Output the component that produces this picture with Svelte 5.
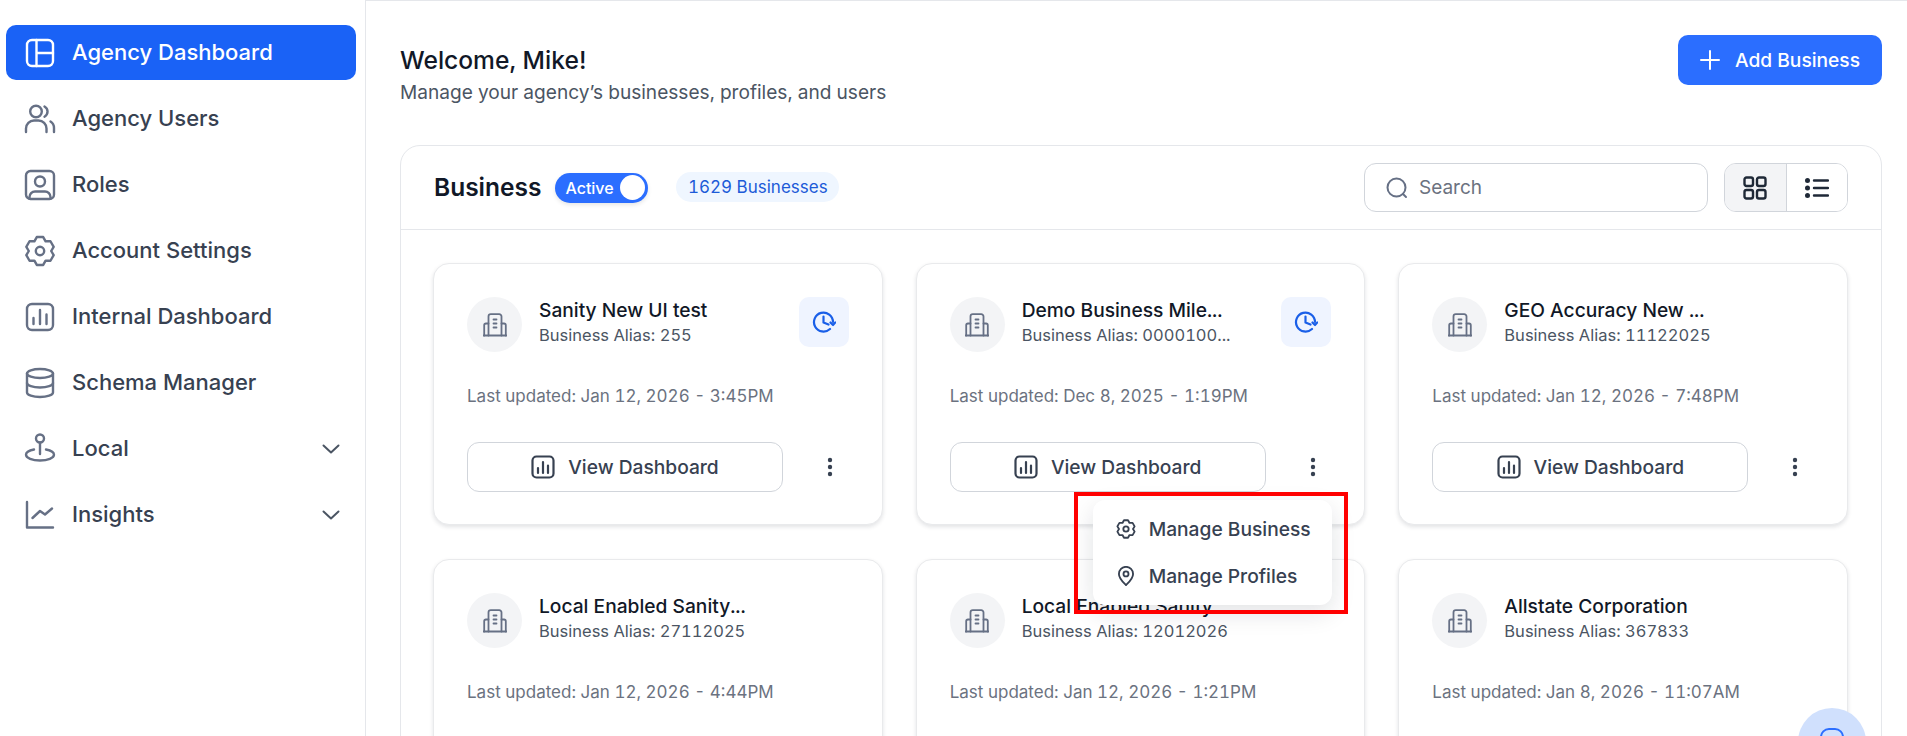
<script>
  function gearPath(cx, cy, ro, ri) {
    const pts = [];
    for (let k = 0; k < 6; k++) {
      const a = -90 + 60 * k;
      for (const [d, r] of [[-13, ro], [13, ro], [30, ri]]) {
        const t = ((a + d) * Math.PI) / 180;
        pts.push(`${(cx + r * Math.cos(t)).toFixed(2)} ${(cy + r * Math.sin(t)).toFixed(2)}`);
      }
    }
    return 'M' + pts.join('L') + 'Z';
  }

  const nav = [
    { label: 'Agency Dashboard', icon: 'layout', active: true },
    { label: 'Agency Users', icon: 'users' },
    { label: 'Roles', icon: 'roles' },
    { label: 'Account Settings', icon: 'gear' },
    { label: 'Internal Dashboard', icon: 'chart' },
    { label: 'Schema Manager', icon: 'db' },
    { label: 'Local', icon: 'local', chevron: true },
    { label: 'Insights', icon: 'insights', chevron: true }
  ];

  const cards = [
    { title: 'Sanity New UI test', alias: 'Business Alias: 255', updated: 'Last updated: Jan 12, 2026 - 3:45PM', sync: true },
    { title: 'Demo Business Mile...', alias: 'Business Alias: 0000100...', updated: 'Last updated: Dec 8, 2025 - 1:19PM', sync: true, menu: true },
    { title: 'GEO Accuracy New ...', alias: 'Business Alias: 11122025', updated: 'Last updated: Jan 12, 2026 - 7:48PM' },
    { title: 'Local Enabled Sanity...', alias: 'Business Alias: 27112025', updated: 'Last updated: Jan 12, 2026 - 4:44PM' },
    { title: 'Local Enabled Sanity...', alias: 'Business Alias: 12012026', updated: 'Last updated: Jan 12, 2026 - 1:21PM' },
    { title: 'Allstate Corporation', alias: 'Business Alias: 367833', updated: 'Last updated: Jan 8, 2026 - 11:07AM' }
  ];
</script>

{#snippet navIcon(name)}
  <svg class="nav-icon" viewBox="0 0 32 32" fill="none" stroke="currentColor" stroke-width="2.400" stroke-linecap="round" stroke-linejoin="round">
    {#if name === 'layout'}
      <rect x="3" y="3" width="26" height="26" rx="5" />
      <path d="M12.500 3v26M12.500 16H29" />
    {:else if name === 'users'}
      <circle cx="12" cy="8.500" r="5.800" />
      <path d="M2 29v-3.500a8 8 0 0 1 8-8h4.500a8 8 0 0 1 8 8V29" />
      <path d="M20.500 3.500a5.800 5.800 0 0 1 0 10.200" />
      <path d="M26.500 18.500a7.600 7.600 0 0 1 3.500 6.500V29" />
    {:else if name === 'roles'}
      <rect x="2" y="2" width="28" height="28" rx="4.500" />
      <circle cx="16" cy="12.500" r="5" />
      <path d="M5.500 29.500v-1.500a5.500 5.500 0 0 1 5.500-5.500h10a5.500 5.500 0 0 1 5.500 5.500v1.500" />
    {:else if name === 'gear'}
      <path d={gearPath(16, 16, 14.300, 11.200)} />
      <circle cx="16" cy="16" r="4.200" />
    {:else if name === 'chart'}
      <rect x="3" y="3" width="26" height="26" rx="5" />
      <path d="M9.500 17v6M16 9v14M22.500 13.500V23" />
    {:else if name === 'db'}
      <ellipse cx="16" cy="6.500" rx="13" ry="4.500" />
      <path d="M3 6.500v19c0 2.500 5.800 4.500 13 4.500s13-2 13-4.500v-19" />
      <path d="M3 16c0 2.500 5.800 4.500 13 4.500s13-2 13-4.500" />
    {:else if name === 'local'}
      <circle cx="16" cy="5.500" r="4" />
      <path d="M16 9.500V21" />
      <path d="M10 16.500c-4.800 .9-8 2.900-8 5.300 0 3.200 6.300 5.700 14 5.700s14-2.500 14-5.700c0-2.400-3.200-4.400-8-5.300" />
    {:else if name === 'insights'}
      <path d="M3 3v25.500h26" />
      <path d="M8.500 19l7.500-7 5 3.500 7-6" />
    {/if}
  </svg>
{/snippet}

{#snippet building()}
  <svg class="building" viewBox="0 0 24 24" fill="none" stroke="currentColor" stroke-width="1.800" stroke-linecap="round" stroke-linejoin="round">
    <path d="M.5 22.500h23" />
    <path d="M5.500 22.500V3.500a2.300 2.300 0 0 1 2.300-2.300h8.400a2.300 2.300 0 0 1 2.300 2.300v19" />
    <path d="M5.500 10.500H3a1.800 1.800 0 0 0-1.800 1.800V22.500M18.500 10.500H21a1.800 1.800 0 0 1 1.800 1.800V22.500" />
    <path d="M10.500 6.500h3M10.500 10.500h3M10.500 14.500h3" />
  </svg>
{/snippet}

{#snippet chartSmall()}
  <svg class="chart-small" viewBox="0 0 24 24" fill="none" stroke="currentColor" stroke-width="2.200" stroke-linecap="round" stroke-linejoin="round">
    <rect x="1.500" y="1.500" width="21" height="21" rx="4" />
    <path d="M7 13v5M12 7v11M17 10.500V18" />
  </svg>
{/snippet}

<div class="page">
  <aside class="sidebar">
    <nav class="nav">
      {#each nav as item}
        <a class="nav-item" class:active={item.active} href="#top">
          {@render navIcon(item.icon)}
          <span class="nav-label">{item.label}</span>
          {#if item.chevron}
            <svg class="chevron" viewBox="0 0 18 10" fill="none" stroke="currentColor" stroke-width="2" stroke-linecap="round" stroke-linejoin="round"><path d="M1.500 1.500L9 8.500l7.500-7" /></svg>
          {/if}
        </a>
      {/each}
    </nav>
  </aside>

  <main class="main">
    <header class="top">
      <div class="welcome">
        <h1>Welcome, Mike!</h1>
        <p>Manage your agency’s businesses, profiles, and users</p>
      </div>
      <button class="add">
        <svg viewBox="0 0 20 20" fill="none" stroke="currentColor" stroke-width="2" stroke-linecap="round"><path d="M10 1v18M1 10h18" /></svg>
        Add Business
      </button>
    </header>

    <section class="panel">
      <div class="panel-head">
        <h2>Business</h2>
        <div class="toggle"><span>Active</span><i></i></div>
        <span class="count">1629 Businesses</span>
        <label class="search">
          <svg viewBox="0 0 24 24" fill="none" stroke="currentColor" stroke-width="2" stroke-linecap="round"><circle cx="11.500" cy="11.500" r="9" /><path d="M18 18l3 3" /></svg>
          <input placeholder="Search" />
        </label>
        <div class="views">
          <button class="view on" aria-label="Grid view">
            <svg viewBox="0 0 24 24" fill="none" stroke="currentColor" stroke-width="2.400" stroke-linejoin="round"><rect x="1.500" y="1.500" width="8.500" height="8.500" rx="2" /><rect x="14" y="1.500" width="8.500" height="8.500" rx="2" /><rect x="1.500" y="14" width="8.500" height="8.500" rx="2" /><rect x="14" y="14" width="8.500" height="8.500" rx="2" /></svg>
          </button>
          <button class="view" aria-label="List view">
            <svg viewBox="0 0 24 24" fill="none" stroke="currentColor" stroke-width="2.400" stroke-linecap="round"><path d="M9 4.500h14M9 12h14M9 19.500h14" /><circle cx="2.500" cy="4.500" r="1.300" fill="currentColor" /><circle cx="2.500" cy="12" r="1.300" fill="currentColor" /><circle cx="2.500" cy="19.500" r="1.300" fill="currentColor" /></svg>
          </button>
        </div>
      </div>

      <div class="grid">
        {#each cards as card}
          <article class="card">
            <div class="card-top">
              <div class="avatar">{@render building()}</div>
              <div class="names">
                <div class="name">{card.title}</div>
                <div class="alias">{card.alias}</div>
              </div>
              {#if card.sync}
                <div class="sync">
                  <svg viewBox="0 0 24 24" fill="none" stroke="currentColor" stroke-width="2.200" stroke-linecap="round" stroke-linejoin="round">
                    <path d="M21 12a9.500 9.500 0 1 0-3 7" />
                    <path d="M11.500 6.500V12.500l5 2" />
                    <path d="M23.300 12.500L21 15l-2.500-2.500" />
                  </svg>
                </div>
              {/if}
            </div>
            <div class="updated">{card.updated}</div>
            <div class="actions">
              <button class="dash">{@render chartSmall()}View Dashboard</button>
              <button class="more" aria-label="More">
                <svg viewBox="0 0 6 20" fill="currentColor"><circle cx="3" cy="3" r="2.200" /><circle cx="3" cy="10" r="2.200" /><circle cx="3" cy="17" r="2.200" /></svg>
              </button>
            </div>
            {#if card.menu}
              <div class="menu">
                <div class="menu-item">
                  <svg viewBox="0 0 24 24" fill="none" stroke="currentColor" stroke-width="2.200" stroke-linejoin="round"><path d={gearPath(12, 12, 10.800, 8.400)} /><circle cx="12" cy="12" r="3.200" /></svg>
                  Manage Business
                </div>
                <div class="menu-item">
                  <svg viewBox="0 0 24 24" fill="none" stroke="currentColor" stroke-width="2.200" stroke-linejoin="round"><path d="M12 23c-1-1.300-8.500-7.500-8.500-13.500a8.500 8.500 0 0 1 17 0C20.500 15.500 13 21.700 12 23z" /><circle cx="12" cy="9.500" r="3" /></svg>
                  Manage Profiles
                </div>
              </div>
            {/if}
          </article>
        {/each}
      </div>
    </section>
  </main>

  <div class="callout"></div>
  <button class="fab" aria-label="Chat">
    <svg viewBox="0 0 24 24" fill="none" stroke="currentColor" stroke-width="2"><rect x="1" y="1" width="22" height="22" rx="8" /></svg>
  </button>
</div>

<style>
  :global(body) {
    margin: 0;
    background: #fff;
    font-family: Inter, "Liberation Sans", sans-serif;
    color: #111827;
    font-variant-numeric: tabular-nums;
  }
  .page {
    position: relative;
    display: flex;
    height: 736px;
    overflow: hidden;
    background: #fff;
  }
  .sidebar {
    box-sizing: border-box;
    width: 366px;
    flex: none;
    padding: 25px 9px 0 6px;
    border-right: 1px solid #e5e7eb;
  }
  .nav {
    display: flex;
    flex-direction: column;
    gap: 11px;
  }
  .nav-item {
    display: flex;
    align-items: center;
    height: 55px;
    padding: 0 16px 0 18px;
    gap: 16px;
    border-radius: 10px;
    color: #374151;
    text-decoration: none;
    font-size: 22px;
    line-height: 28px;
    font-weight: 500;
  }
  .nav-item.active {
    background: #1a62f6;
    color: #fff;
  }
  .nav-icon {
    width: 32px;
    height: 32px;
    flex: none;
    color: #667085;
  }
  .active .nav-icon {
    color: #fff;
  }
  .nav-label {
    flex: 1;
    padding-bottom: 2px;
  }
  .chevron {
    width: 18px;
    height: 10px;
    color: #4b5563;
  }
  .main {
    flex: 1;
    min-width: 0;
    box-sizing: border-box;
    padding: 34px 25px 0 34px;
    border-top: 1px solid #e5e7eb;
  }
  .top {
    display: flex;
    justify-content: space-between;
    align-items: flex-start;
    height: 110px;
  }
  .welcome {
    padding-top: 9px;
  }
  h1 {
    margin: 0;
    font-size: 24.600px;
    line-height: 32px;
    font-weight: 500;
    color: #111827;
  }
  .welcome p {
    margin: 2px 0 0;
    font-size: 19.100px;
    line-height: 28px;
    color: #4b5563;
  }
  .add {
    display: flex;
    align-items: center;
    justify-content: center;
    gap: 15px;
    box-sizing: border-box;
    width: 204px;
    height: 50px;
    border: 0;
    border-radius: 10px;
    background: #2b6eff;
    color: #fff;
    font: 500 19.200px Inter, sans-serif;
  }
  .add svg {
    width: 20px;
    height: 20px;
  }
  .panel {
    box-sizing: border-box;
    height: 700px;
    border: 1px solid #e5e7eb;
    border-radius: 20px;
  }
  .panel-head {
    box-sizing: border-box;
    display: flex;
    align-items: center;
    height: 84px;
    padding: 0 33px;
    border-bottom: 1px solid #e5e7eb;
  }
  h2 {
    margin: 0 14px 2px 0;
    font-size: 24.500px;
    font-weight: 600;
    line-height: 32px;
    color: #111827;
  }
  .toggle {
    box-sizing: border-box;
    display: flex;
    align-items: center;
    justify-content: space-between;
    width: 93px;
    height: 30px;
    padding: 0 3px 0 10px;
    border-radius: 15px;
    background: #2b6eff;
    color: #fff;
    font-size: 16px;
    font-weight: 500;
    box-shadow: 0 2px 4px rgba(0, 0, 0, 0.1);
  }
  .toggle i {
    width: 25px;
    height: 25px;
    border-radius: 50%;
    background: #fff;
  }
  .count {
    margin-left: 28px;
    margin-bottom: 2px;
    padding: 0 11.500px;
    height: 30px;
    line-height: 30px;
    border-radius: 15px;
    background: #eff6ff;
    color: #1d5bd8;
    font-size: 17px;
  }
  .search {
    box-sizing: border-box;
    display: flex;
    align-items: center;
    gap: 10px;
    width: 344px;
    height: 49px;
    margin-left: auto;
    padding: 0 20px;
    border: 1px solid #d1d5db;
    border-radius: 12px;
    color: #667085;
  }
  .search svg {
    width: 24px;
    height: 24px;
    flex: none;
  }
  .search input {
    flex: 1;
    min-width: 0;
    border: 0;
    outline: 0;
    padding: 0;
    background: none;
    font: 400 19px Inter, sans-serif;
    color: #374151;
  }
  .search input::placeholder {
    color: #6b7280;
    opacity: 1;
  }
  .views {
    display: flex;
    box-sizing: border-box;
    width: 124px;
    height: 49px;
    margin-left: 16px;
    border: 1px solid #d1d5db;
    border-radius: 12px;
    overflow: hidden;
  }
  .view {
    flex: 1;
    display: flex;
    align-items: center;
    justify-content: center;
    padding: 0;
    border: 0;
    background: #fff;
    color: #1f2937;
  }
  .view.on {
    background: #f3f4f6;
    border-right: 1px solid #d1d5db;
  }
  .view svg {
    width: 24px;
    height: 24px;
  }
  .grid {
    display: grid;
    grid-template-columns: repeat(3, 1fr);
    gap: 34px 33px;
    padding: 33px 33px 0 32px;
  }
  .card {
    position: relative;
    box-sizing: border-box;
    height: 262px;
    padding: 33px 33px;
    border: 1px solid #e9eaec;
    border-radius: 16px;
    background: #fff;
    box-shadow: 0 2px 4px rgba(16, 24, 40, 0.12);
  }
  .card-top {
    display: flex;
    align-items: center;
    gap: 17px;
  }
  .avatar {
    width: 55px;
    height: 55px;
    flex: none;
    display: flex;
    align-items: center;
    justify-content: center;
    border-radius: 50%;
    background: #f3f4f6;
    color: #667085;
  }
  .building {
    width: 24px;
    height: 24px;
  }
  .names {
    flex: 1;
    min-width: 0;
    padding-bottom: 5px;
  }
  .name {
    font-size: 19.200px;
    line-height: 26px;
    font-weight: 500;
    color: #111827;
    white-space: nowrap;
  }
  .alias {
    font-size: 16.500px;
    line-height: 24px;
    color: #4b5563;
    white-space: nowrap;
  }
  .sync {
    align-self: flex-start;
    width: 50px;
    height: 50px;
    flex: none;
    display: flex;
    align-items: center;
    justify-content: center;
    border-radius: 10px;
    background: #eff4ff;
    color: #1a5fe8;
  }
  .sync svg {
    width: 24px;
    height: 24px;
  }
  .updated {
    margin-top: 32px;
    font-size: 17px;
    line-height: 24px;
    color: #6b7280;
  }
  .actions {
    display: flex;
    align-items: center;
    margin-top: 34px;
  }
  .dash {
    box-sizing: border-box;
    display: flex;
    align-items: center;
    justify-content: center;
    gap: 13px;
    width: 316px;
    height: 50px;
    padding: 0;
    border: 1px solid #d1d5db;
    border-radius: 12px;
    background: #fff;
    color: #374151;
    font: 500 19.200px Inter, sans-serif;
  }
  .chart-small {
    width: 24px;
    height: 24px;
  }
  .more {
    width: 6px;
    height: 20px;
    margin-left: 44px;
    padding: 0;
    border: 0;
    background: none;
    color: #374151;
  }
  .more svg {
    display: block;
    width: 6px;
    height: 20px;
  }
  .menu {
    position: absolute;
    z-index: 5;
    top: 236px;
    left: 176px;
    box-sizing: border-box;
    width: 239px;
    height: 105px;
    padding: 5px 0;
    border-radius: 12px;
    background: #fff;
    box-shadow: 0 8px 24px rgba(16, 24, 40, 0.12);
  }
  .menu-item {
    display: flex;
    align-items: center;
    gap: 13px;
    height: 47px;
    padding-left: 23px;
    font-size: 19.200px;
    font-weight: 500;
    color: #374151;
  }
  .menu-item svg {
    width: 20px;
    height: 20px;
    flex: none;
  }
  .callout {
    position: absolute;
    z-index: 6;
    left: 1074px;
    top: 492px;
    width: 274px;
    height: 122px;
    box-sizing: border-box;
    border: 4px solid #f00;
  }
  .fab {
    position: absolute;
    z-index: 7;
    left: 1798px;
    top: 708px;
    width: 68px;
    height: 68px;
    padding: 20px 0 0 0;
    border: 0;
    border-radius: 50%;
    background: #d0e0fd;
    color: #2b6eff;
    display: flex;
    justify-content: center;
    align-items: flex-start;
  }
  .fab svg {
    width: 24px;
    height: 24px;
  }
</style>
